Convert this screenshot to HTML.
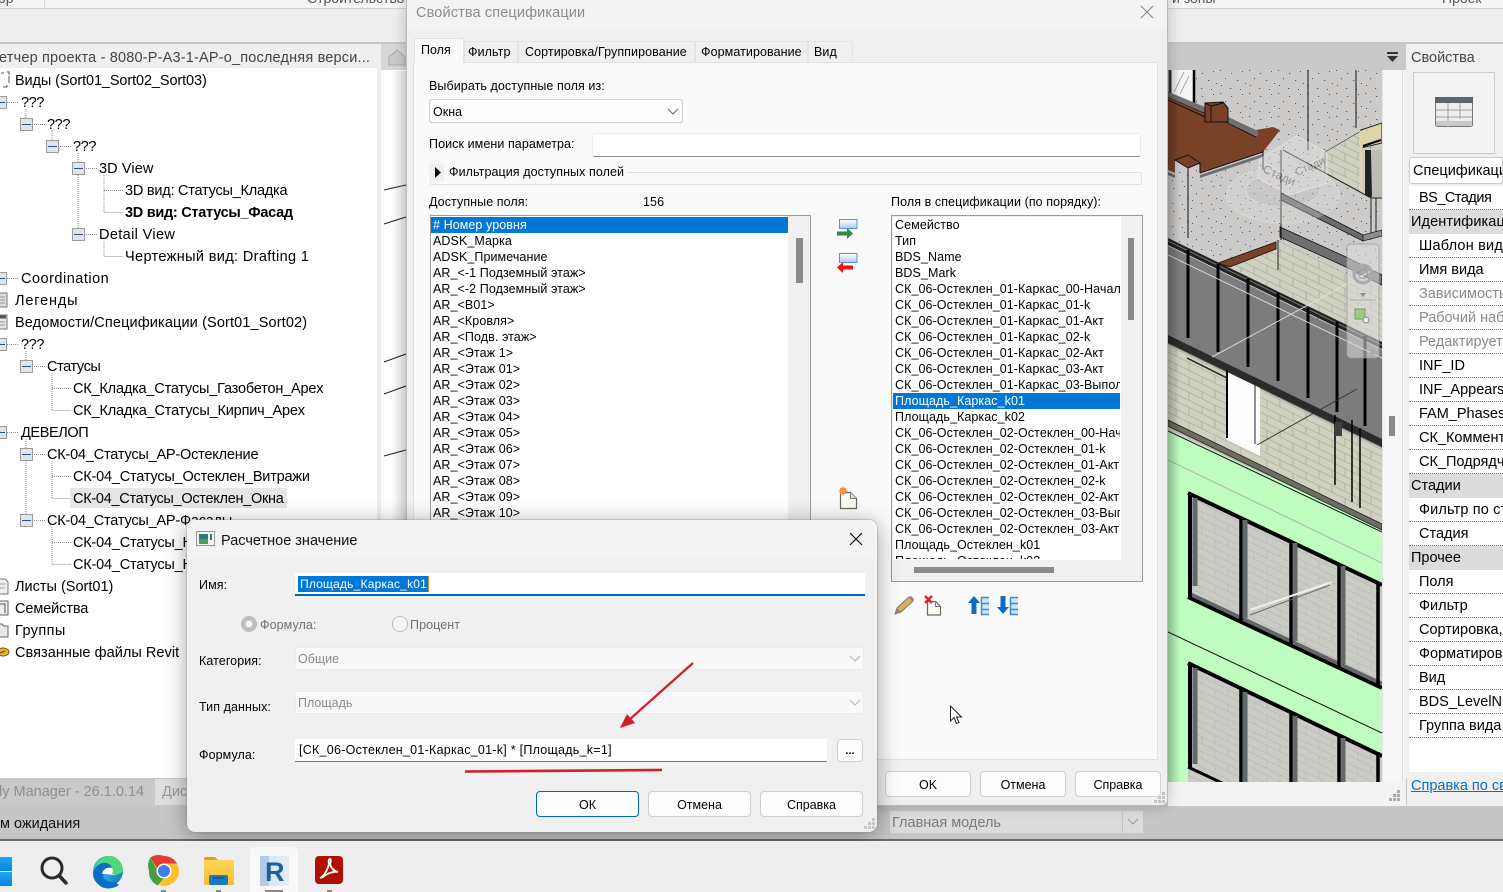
<!DOCTYPE html>
<html lang="ru"><head><meta charset="utf-8"><title>Свойства спецификации</title>
<style>
html,body{margin:0;padding:0;width:1503px;height:892px;overflow:hidden;background:#eee;font-family:"Liberation Sans","Noto Sans CJK SC",sans-serif;color:#000}
.a,.t{position:absolute}
.t{white-space:nowrap}
.tr{font-size:14.5px;line-height:22px;height:22px;margin-top:1px}
.d{font-size:12.5px;letter-spacing:.08px;line-height:16px;height:16px}
.list div{height:16px;line-height:17px;font-size:12.5px;letter-spacing:.08px;padding-left:2px;white-space:nowrap;overflow:hidden}
.sel{background:#0078d7;color:#fff}
.btn{position:absolute;box-sizing:border-box;background:#fdfdfd;border:1px solid #d0d0d0;border-radius:4px;text-align:center;font-size:12.5px;line-height:26px;height:26px}
.p{position:absolute;left:1409px;width:94px;height:24px;margin-top:1px;box-sizing:border-box;background:#fff;border-bottom:1px dotted #777;font-size:14.5px;line-height:25px;padding-left:10px;white-space:nowrap;overflow:hidden}
.h{background:#dcdcdc;border:0;padding-left:2px}
.g{color:#8a8a8a}
.tab{position:absolute;top:41px;height:21px;box-sizing:border-box;background:#f0f0f0;border:1px solid #e4e4e4;border-bottom:0;font-size:12.5px;letter-spacing:.08px;line-height:20px;text-align:left}
</style></head><body>

<!-- ribbon -->
<div class="a" style="left:0;top:0;width:1503px;height:8px;background:#f5f5f5;border-bottom:1px solid #d4d4d4"></div>
<div class="a" style="left:44px;top:0;width:1px;height:8px;background:#d8d8d8"></div>
<div class="t" style="left:-2px;top:-10px;font-size:14px;color:#555">ор</div>
<div class="t" style="left:307px;top:-10px;font-size:14px;color:#555">Строительство</div>
<div class="t" style="left:1172px;top:-10px;font-size:14px;color:#555">и зоны</div>
<div class="t" style="left:1442px;top:-10px;font-size:14px;color:#555">Проек</div>
<div class="a" style="left:0;top:9px;width:1503px;height:33px;background:#eee"></div>
<div class="a" style="left:0;top:42px;width:1503px;height:2px;background:#c4c4c4"></div>

<!-- project browser -->
<div class="a" style="left:0;top:44px;width:380px;height:734px;background:#fff"></div>
<div class="a" style="left:0;top:44px;width:380px;height:24px;background:#efefef"></div>
<div class="t" style="left:-1px;top:47px;font-size:14.5px;line-height:22px;color:#444;width:372px;overflow:hidden;letter-spacing:.18px">етчер проекта - 8080-P-A3-1-AP-о_последняя верси...</div>
<div class="a" style="left:377px;top:68px;width:4px;height:710px;background:#eee"></div>

<!-- drawing strip between browser and dialog -->
<div class="a" style="left:381px;top:44px;width:26px;height:26px;background:#d6d6d6"></div>
<div class="a" style="left:381px;top:70px;width:26px;height:708px;background:#fff"></div>
<svg class="a" style="left:381px;top:44px" width="26" height="734" viewBox="0 0 26 734">
<defs><linearGradient id="sh1" x1="0" x2="1"><stop offset="0" stop-color="#000" stop-opacity="0"/><stop offset="1" stop-color="#000" stop-opacity=".12"/></linearGradient></defs>
<path d="M8 13l8-7 8 7v8H8z" fill="#c9c9c9" stroke="#aaa"/>
<path d="M3 146l22-5M3 180l22-7M3 318l22-8M3 350l22-8M3 412l22-6" stroke="#222" fill="none"/>
<rect x="10" y="27" width="16" height="707" fill="url(#sh1)"/>
</svg>

<!-- tree connectors -->
<svg class="a" style="left:0;top:68px" width="380" height="600" viewBox="0 68 380 600" fill="none" stroke="#8c8c8c" stroke-dasharray="1 1">
<path d="M7 102.500H19M26 109V118M32 124.500H45M52 131V140M58 146.500H71M78 153V162M84 168.500H97M84 234.500H97M78 175V228M104 175V212.500H123M104 190.500H123M104 241V256.500H123"/>
<path d="M7 278.500H19M7 344.500H19M26 351V360M32 366.500H45M52 373V410.500H71M52 388.500H71M7 432.500H19M26 439V514M32 454.500H45M52 461V498.500H71M52 476.500H71M32 520.500H45M52 527V564.500H71M52 542.500H71"/>
</svg>
<!-- expanders -->
<svg class="a" style="left:0;top:68px" width="100" height="470" viewBox="0 68 100 470">
<defs><g id="ex"><rect x=".5" y=".5" width="12" height="12" fill="#e4e4e4" stroke="#9a9a9a"/><path d="M2 6.500H11" stroke="#2a4fa0"/></g></defs>
<use href="#ex" x="-6" y="96"/><use href="#ex" x="20" y="118"/><use href="#ex" x="46" y="140"/><use href="#ex" x="72" y="162"/><use href="#ex" x="72" y="228"/>
<use href="#ex" x="-6" y="272"/><use href="#ex" x="-6" y="338"/><use href="#ex" x="20" y="360"/><use href="#ex" x="-6" y="426"/><use href="#ex" x="20" y="448"/><use href="#ex" x="20" y="514"/>
<!-- node icons -->
<path d="M1 73h3M7 72h2v3M7 85v2H3M9 76v7" stroke="#555" fill="none"/>
<rect x="-4" y="293" width="11" height="14" fill="#ddd" stroke="#777"/><path d="M-2 297h7M-2 300h7M-2 303h7" stroke="#999"/>
<rect x="-4" y="315" width="11" height="14" fill="#e6e6e6" stroke="#777"/><path d="M-3 317h9" stroke="#555" stroke-width="3"/><path d="M-2 322h7M-2 325h7" stroke="#999"/>
</svg>
<svg class="a" style="left:0;top:570px" width="14" height="90" viewBox="0 570 14 90">
<path d="M-3 579h8l3 3v12H-3z" fill="#eee" stroke="#777"/><path d="M0 584h5M0 588h5" stroke="#aaa"/>
<path d="M-3 601h11v14H-3z" fill="#eee" stroke="#666"/><path d="M0 604h5v9" stroke="#555" fill="none"/>
<path d="M-3 624h5l2 2h4v11H-3z" fill="#e8e8e8" stroke="#666"/>
<ellipse cx="3" cy="652" rx="6" ry="4" fill="#e8b02e" stroke="#7d5a10"/><path d="M0 653l5-2" stroke="#5c4a10"/>
</svg>

<div class="a" style="left:70px;top:488px;width:217px;height:20px;background:#e6e6e6"></div>
<div class="t tr" style="left:15px;top:69px;letter-spacing:-.11px">Виды (Sort01_Sort02_Sort03)</div>
<div class="t tr" style="left:21px;top:91px;letter-spacing:-.4px">???</div>
<div class="t tr" style="left:47px;top:113px;letter-spacing:-.4px">???</div>
<div class="t tr" style="left:73px;top:135px;letter-spacing:-.4px">???</div>
<div class="t tr" style="left:99px;top:157px;letter-spacing:.1px">3D View</div>
<div class="t tr" style="left:125px;top:179px;letter-spacing:-.23px">3D вид: Статусы_Кладка</div>
<div class="t tr" style="left:125px;top:201px;font-weight:bold;letter-spacing:-.28px">3D вид: Статусы_Фасад</div>
<div class="t tr" style="left:99px;top:223px;letter-spacing:.36px">Detail View</div>
<div class="t tr" style="left:125px;top:245px;letter-spacing:.36px">Чертежный вид: Drafting 1</div>
<div class="t tr" style="left:21px;top:267px;letter-spacing:.5px">Coordination</div>
<div class="t tr" style="left:15px;top:289px;letter-spacing:.85px">Легенды</div>
<div class="t tr" style="left:15px;top:311px;letter-spacing:.13px">Ведомости/Спецификации (Sort01_Sort02)</div>
<div class="t tr" style="left:21px;top:333px;letter-spacing:-.4px">???</div>
<div class="t tr" style="left:47px;top:355px;letter-spacing:-.4px">Статусы</div>
<div class="t tr" style="left:73px;top:377px;letter-spacing:-.19px">СК_Кладка_Статусы_Газобетон_Apex</div>
<div class="t tr" style="left:73px;top:399px;letter-spacing:-.17px">СК_Кладка_Статусы_Кирпич_Apex</div>
<div class="t tr" style="left:21px;top:421px;letter-spacing:-.4px">ДЕВЕЛОП</div>
<div class="t tr" style="left:47px;top:443px;letter-spacing:-.2px">СК-04_Статусы_АР-Остекление</div>
<div class="t tr" style="left:73px;top:465px;letter-spacing:-.2px">СК-04_Статусы_Остеклен_Витражи</div>
<div class="t tr" style="left:73px;top:487px;letter-spacing:-.28px">СК-04_Статусы_Остеклен_Окна</div>
<div class="t tr" style="left:47px;top:509px;letter-spacing:-.2px">СК-04_Статусы_АР-Фасады</div>
<div class="t tr" style="left:73px;top:531px;letter-spacing:-.2px">СК-04_Статусы_Навесные</div>
<div class="t tr" style="left:73px;top:553px;letter-spacing:-.2px">СК-04_Статусы_Навесные</div>
<div class="t tr" style="left:15px;top:575px">Листы (Sort01)</div>
<div class="t tr" style="left:15px;top:597px;letter-spacing:-.1px">Семейства</div>
<div class="t tr" style="left:15px;top:619px;letter-spacing:.4px">Группы</div>
<div class="t tr" style="left:15px;top:641px;letter-spacing:.05px">Связанные файлы Revit</div>

<!-- bottom dimmed bars -->
<div class="a" style="left:0;top:778px;width:1503px;height:62px;background:#c6c6c6"></div>
<div class="a" style="left:0;top:780px;width:155px;height:26px;background:#c9c9c9"></div>
<div class="t" style="left:-1px;top:782px;font-size:14.5px;line-height:20px;color:#8f8f8f;margin-top:0">ly Manager - 26.1.0.14</div>
<div class="a" style="left:155px;top:779px;width:32px;height:26px;background:#dedede"></div>
<div class="t" style="left:162px;top:782px;font-size:14.5px;line-height:20px;color:#9a9a9a">Дис</div>
<div class="t" style="left:0;top:814px;font-size:14.5px;line-height:20px;color:#111">м ожидания</div>
<div class="a" style="left:890px;top:811px;width:253px;height:22px;background:#dcdcdc;font-size:14.5px;line-height:25px;color:#7a7a7a;text-indent:2px">Главная модель</div>
<div class="a" style="left:1122px;top:811px;width:1px;height:22px;background:#c4c4c4"></div>
<svg class="a" style="left:1127px;top:818px" width="12" height="8"><path d="M1 1l5 5 5-5" fill="none" stroke="#999"/></svg>
<div class="a" style="left:0;top:839px;width:1503px;height:2px;background:#5f6d73"></div>

<!-- viewport -->
<div class="a" style="left:1168px;top:44px;width:238px;height:26px;background:#c9c9c9"></div>
<svg class="a" style="left:1386px;top:52px" width="13" height="10"><path d="M1 0h11v2H1z" fill="#333"/><path d="M1 4h11L6.500 10z" fill="#333"/></svg>
<div class="a" style="left:1168px;top:70px;width:238px;height:736px;background:#f3f3f3"></div>
<div class="a" style="left:1382px;top:71px;width:20px;height:711px;background:#f6f6f6;border-right:1px solid #ddd"></div>
<div class="a" style="left:1389px;top:416px;width:6px;height:20px;background:#8a8a8a"></div>
<svg class="a" style="left:1388px;top:790px" width="14" height="14"><g fill="#aaa"><rect x="9" y="0" width="3" height="3"/><rect x="5" y="4" width="3" height="3"/><rect x="9" y="4" width="3" height="3"/><rect x="1" y="8" width="3" height="3"/><rect x="5" y="8" width="3" height="3"/><rect x="9" y="8" width="3" height="3"/></g></svg>

<svg class="a" style="left:1168px;top:70px" width="214" height="712" viewBox="1168 70 214 712">
<defs>
<pattern id="sp" width="29" height="23" patternUnits="userSpaceOnUse">
<rect width="29" height="23" fill="#cdcbc9"/>
<g fill="#5a5a5a"><rect x="2" y="1" width="1.200" height="1"/><rect x="13" y="4" width="1.200" height="1"/><rect x="24" y="2" width="1" height="1"/><rect x="7" y="9" width="1" height="1.200"/><rect x="19" y="11" width="1.200" height="1"/><rect x="27" y="14" width="1" height="1"/><rect x="3" y="16" width="1" height="1"/><rect x="12" y="19" width="1.200" height="1"/><rect x="22" y="20" width="1" height="1"/></g>
</pattern>
<pattern id="br" width="26" height="15" patternUnits="userSpaceOnUse" patternTransform="skewY(26)">
<rect width="26" height="15" fill="#d0d1c1"/><path d="M0 .5H26M0 7.500H26M6 0V7.500M19 7.500V15" stroke="#aaab9d" stroke-width=".8" fill="none"/>
</pattern>
<pattern id="gl" width="26" height="15" patternUnits="userSpaceOnUse" patternTransform="skewY(26)">
<rect width="26" height="15" fill="#cbcbc6"/><path d="M0 .5H26M0 7.500H26M6 0V7.500M19 7.500V15" stroke="#b8b8b2" stroke-width=".7" fill="none"/>
</pattern>
<linearGradient id="fade" x1="0" x2="1"><stop offset="0" stop-color="#000" stop-opacity=".18"/><stop offset="1" stop-color="#000" stop-opacity="0"/></linearGradient>
</defs>
<rect x="1168" y="70" width="214" height="712" fill="url(#sp)"/>
<!-- top window -->
<path d="M1168 70h27v33l-27-12z" fill="#f4f4f4"/><path d="M1174 92l10-20M1180 94l9-18" stroke="#aaa"/><path d="M1194 70v33" stroke="#000" stroke-width="2.500"/><path d="M1170 70v24" stroke="#333" stroke-width="3"/>
<!-- brown terrace -->
<path d="M1168 97l37 16v-10l18-1 3 20 30 15v-7l17-3 7 3-17 22-63 21v-8l-12-10-13 5v13l-7-3z" fill="#7a4129"/>
<path d="M1168 97l37 16M1226 122l30 15M1168 100l37 17M1200 173l63-21" stroke="#111" fill="none"/>
<path d="M1168 92l37 15v6l-37-16zM1226 116l32 15v6l-32-15zM1200 175l63-21v3l-63 21zM1168 172l7 3v3l-7-3z" fill="#6f6f6f"/>
<path d="M1205 103l18-1 5 6v14h-23z" fill="#7a4129" stroke="#111"/>
<path d="M1205 103l6 3v15M1211 106l12-3" stroke="#111" fill="none"/>
<path d="M1175 160l13-5 12 8-12 5z" fill="#7a4129" stroke="#111"/>
<path d="M1188 168v70M1200 173v-10" stroke="#111"/>
<path d="M1308 70v80M1356 70v58M1263 150v20" stroke="#111" fill="none"/>
<!-- right detail -->
<path d="M1325 152l36-21v66l-36-20z" fill="url(#br)" stroke="#333" stroke-width=".6"/>
<path d="M1361 130l21-7v20l-21 5z" fill="#ded4a6" stroke="#222"/>
<path d="M1361 131v66" stroke="#dfd6a8" stroke-width="3"/>
<path d="M1365 150h6l1 47h-7z" fill="#222"/><path d="M1372 150h10v50h-10z" fill="#bdbdb2"/><path d="M1363 146l18-6" stroke="#000" stroke-width="2"/>
<!-- parapet right -->
<path d="M1283 150l88 48 11-1v32l-19 5-82-42z" fill="url(#sp)"/>
<path d="M1283 150l88 48h11M1371 198v36M1376 198v34" stroke="#222" fill="none"/>
<path d="M1281 193l82 42v6l-82-41z" fill="#6c6c6c" stroke="#111" stroke-width=".8"/>
<path d="M1363 235l19-5v6l-19 5z" fill="#8c8c8c" stroke="#222" stroke-width=".8"/>
<path d="M1280 227l66 30 36 18v10l-36-18-66-30z" fill="#6f6f6f" stroke="#111" stroke-width=".8"/>
<path d="M1281 150v90" stroke="#111" fill="none"/>
<!-- brick room -->
<path d="M1228 267l50-27 104 52v52z" fill="url(#br)"/>
<path d="M1218 263l58-21v7l-46 18z" fill="#7a4129" stroke="#111" stroke-width=".8"/>
<path d="M1278 240v30" stroke="#222"/>
<!-- curtain wall -->
<path d="M1168 246l214 104v100l-214-104z" fill="#7c7c7c"/>
<path d="M1168 238l214 104v7l-214-104z" fill="#222"/>
<path d="M1168 241l214 104" stroke="#777"/>
<path d="M1188 250v88M1218 264v88M1248 279v88M1278 293v88M1308 308v90M1337 322v90M1365 336v90" stroke="#000" stroke-width="3"/>
<!-- lower brick & opening -->
<path d="M1168 344l214 104v90l-214-104z" fill="url(#br)"/>
<path d="M1168 335l214 104v8l-214-104z" fill="#2b2b2b"/>
<path d="M1227 372l33 16v68l-33-16z" fill="#fdfdfd"/>
<path d="M1227 370v68" stroke="#000" stroke-width="2"/>
<path d="M1187 358l40 20" stroke="#222" stroke-width="1.500"/><path d="M1255 382v62" stroke="#222"/>
<path d="M1257 445l100-56" stroke="#333" fill="none"/>
<path d="M1335 415v70M1352 420v82M1360 428v80" stroke="#000" stroke-width="1.500"/>
<rect x="1335" y="422" width="7" height="14" fill="#3c4244"/>
<!-- green facade -->
<path d="M1168 430l214 98v254h-214z" fill="#bffcc0"/>
<path d="M1168 420l214 104v6l-214-104z" fill="#6e6d62" stroke="#222" stroke-width=".8"/>
<path d="M1168 431l214 101" stroke="#111" fill="none"/>
<path d="M1168 460l214 103" stroke="#aeb5ae" fill="none"/>
<path d="M1168 632l214 101" stroke="#111" fill="none"/>
<!-- window 1 -->
<path d="M1188 493l194 92v103l-194-91z" fill="url(#gl)"/>
<path d="M1188 493l194 92M1188 597l194 91" stroke="#000" stroke-width="4" fill="none"/>
<path d="M1190 594l192 90" stroke="#5f6768" stroke-width="4" fill="none"/>
<path d="M1190 493v104" stroke="#000" stroke-width="4"/>
<path d="M1195 498v88" stroke="#626a6b" stroke-width="5"/>
<path d="M1241 518v103M1291 541v104M1339 564v103M1378 583v104" stroke="#000" stroke-width="3.500"/>
<path d="M1245 520v98M1295 543v98M1343 566v98" stroke="#626a6b" stroke-width="5"/>
<path d="M1250 610l82-28" stroke="#eee" stroke-width="2" fill="none"/>
<path d="M1250 615l80-30" stroke="#666" fill="none"/>
<!-- window 2 -->
<path d="M1188 663l194 93v40h-194z" fill="url(#gl)"/>
<path d="M1188 663l194 93" stroke="#000" stroke-width="4" fill="none"/>
<path d="M1190 663v104" stroke="#000" stroke-width="4"/>
<path d="M1195 668v96" stroke="#626a6b" stroke-width="5"/>
<path d="M1188 767l49 23" stroke="#000" stroke-width="3"/>
<path d="M1241 688v100M1291 712v76M1339 734v54M1378 752v36" stroke="#000" stroke-width="3.500"/>
<path d="M1245 692v96M1295 716v72M1343 738v50" stroke="#626a6b" stroke-width="5"/>
<!-- thin white lines on panels -->
<path d="M1168 255l214 103M1212 357l170-92" stroke="#e0e0e0" fill="none" opacity=".9"/>
<!-- view cube -->
<g opacity=".4">
<ellipse cx="1283" cy="195" rx="56" ry="28" fill="#ddd" stroke="#eee" stroke-width="1.500" opacity=".8"/>
<ellipse cx="1283" cy="190" rx="37" ry="17" fill="#c6c6c6" stroke="#eee"/>
<path d="M1259 159l38-23 30 17v30l-38 12-30-16z" fill="#e2e2e2" stroke="#fff"/>
<path d="M1259 159l30 19 38-25M1289 178v17" stroke="#fff" fill="none"/>
<text x="1262" y="172" font-size="12" fill="#444" transform="rotate(24 1262 172)" font-family="Liberation Sans, sans-serif">Стади</text>
<text x="1297" y="176" font-size="11" fill="#444" transform="rotate(-24 1297 176)" font-family="Liberation Sans, sans-serif">Стади</text>
</g>
<!-- nav bar -->
<rect x="1347" y="244" width="32" height="114" rx="4" fill="#dcdcdc" fill-opacity=".55" stroke="#999" stroke-opacity=".7"/>
<circle cx="1363" cy="274" r="9" fill="none" stroke="#aaa" stroke-width="3"/><circle cx="1363" cy="274" r="4.500" fill="none" stroke="#999"/>
<path d="M1350 300h26" stroke="#aaa"/><path d="M1360 293h6l-3 4z" fill="#888"/>
<rect x="1355" y="309" width="10" height="10" fill="#a4c68a" stroke="#76a060"/>
<circle cx="1366" cy="320" r="3" fill="#eee" stroke="#888"/><circle cx="1373" cy="352" r="3" fill="#aaa"/>
<rect x="1168" y="70" width="12" height="712" fill="url(#fade)"/>
</svg>
<div class="a" style="left:1382px;top:70px;width:1px;height:712px;background:#e6e6e6"></div>

<!-- properties panel -->
<div class="a" style="left:1407px;top:44px;width:96px;height:762px;background:#f0f0f0"></div>
<div class="t" style="left:1411px;top:47px;font-size:14.5px;line-height:22px;color:#444">Свойства</div>
<div class="a" style="left:1413px;top:72px;width:82px;height:82px;box-sizing:border-box;background:#f3f3f3;border:1px solid #ccc"></div>
<svg class="a" style="left:1434px;top:96px" width="40" height="32"><rect x="1.500" y="1.500" width="37" height="29" rx="2" fill="#eee" stroke="#777"/><rect x="1" y="1" width="38" height="6" fill="#5c6470"/><path d="M2 14h36M2 21h36M14 7v24M26 7v16" stroke="#a0a0a0"/><rect x="2" y="25" width="36" height="5" fill="#c8c8c8"/></svg>
<div class="a" style="left:1409px;top:157px;width:94px;height:27px;box-sizing:border-box;background:#fff;border:1px solid #ccc;border-radius:3px 0 0 3px;font-size:14.5px;line-height:27px;padding-left:3px;white-space:nowrap;overflow:hidden">Спецификация</div>
<div class="p" style="top:185px;letter-spacing:-.5px">BS_Стадия</div>
<div class="p h" style="top:209px;letter-spacing:.1px">Идентификация</div>
<div class="p" style="top:233px;letter-spacing:.2px">Шаблон вида</div>
<div class="p" style="top:257px">Имя вида</div>
<div class="p g" style="top:281px">Зависимость</div>
<div class="p g" style="top:305px">Рабочий набор</div>
<div class="p g" style="top:329px">Редактируется</div>
<div class="p" style="top:353px">INF_ID</div>
<div class="p" style="top:377px">INF_Appears</div>
<div class="p" style="top:401px">FAM_Phases</div>
<div class="p" style="top:425px">СК_Комментарий</div>
<div class="p" style="top:449px">СК_Подрядчик</div>
<div class="p h" style="top:473px">Стадии</div>
<div class="p" style="top:497px;letter-spacing:.15px">Фильтр по стадиям</div>
<div class="p" style="top:521px">Стадия</div>
<div class="p h" style="top:545px">Прочее</div>
<div class="p" style="top:569px">Поля</div>
<div class="p" style="top:593px">Фильтр</div>
<div class="p" style="top:617px">Сортировка,Групп</div>
<div class="p" style="top:641px">Форматирование</div>
<div class="p" style="top:665px">Вид</div>
<div class="p" style="top:689px">BDS_LevelNumber</div>
<div class="p" style="top:713px">Группа вида</div>
<div class="a" style="left:1409px;top:738px;width:94px;height:34px;background:#fff"></div>
<div class="t" style="left:1411px;top:775px;font-size:14.5px;line-height:22px;color:#0a6cc8;text-decoration:underline">Справка по свойствам</div>

<!-- DIALOG 1 -->
<div class="a" style="left:406px;top:-6px;width:762px;height:812px;background:#f0f0f0;border:1px solid #bbb;box-sizing:border-box;box-shadow:0 0 14px rgba(0,0,0,.22);border-radius:0 0 6px 6px"></div>
<div class="a" style="left:407px;top:0;width:760px;height:30px;background:#f3f3f3"></div>
<div class="t" style="left:416px;top:3px;font-size:14.5px;line-height:20px;color:#8c8c8c;letter-spacing:.13px">Свойства спецификации</div>
<svg class="a" style="left:1140px;top:5px" width="14" height="14"><path d="M1 1l12 12M13 1L1 13" stroke="#888" stroke-width="1.100"/></svg>
<div class="a" style="left:413px;top:62px;width:745px;height:698px;box-sizing:border-box;background:#fafafa;border:1px solid #e2e2e2"></div>
<div class="tab" style="left:464px;width:54px;padding-left:3px">Фильтр</div>
<div class="tab" style="left:518px;width:177px;padding-left:6px">Сортировка/Группирование</div>
<div class="tab" style="left:695px;width:113px;padding-left:5px">Форматирование</div>
<div class="tab" style="left:808px;width:45px;padding-left:5px">Вид</div>
<div class="a" style="left:414px;top:38px;width:50px;height:25px;box-sizing:border-box;background:#fafafa;border:1px solid #e2e2e2;border-bottom:0;font-size:12.5px;line-height:22px;padding-left:6px;color:#000">Поля</div>

<div class="t d" style="left:429px;top:78px">Выбирать доступные поля из:</div>
<div class="a" style="left:429px;top:99px;width:254px;height:24px;box-sizing:border-box;background:#fdfdfd;border:1px solid #d0d0d0;border-radius:3px;font-size:12.5px;line-height:24px;padding-left:3px">Окна</div>
<svg class="a" style="left:667px;top:108px" width="12" height="8"><path d="M1 1l5 5 5-5" fill="none" stroke="#666"/></svg>
<div class="t d" style="left:429px;top:136px">Поиск имени параметра:</div>
<div class="a" style="left:592px;top:133px;width:549px;height:24px;box-sizing:border-box;background:#fff;border:1px solid #ececec;border-bottom:1px solid #8a8a8a;border-radius:3px"></div>
<div class="a" style="left:430px;top:172px;width:712px;height:13px;box-sizing:border-box;border:1px solid #e2e2e2;border-top:1px solid #e0e0e0;border-radius:2px"></div>
<div class="a" style="left:429px;top:164px;width:198px;height:17px;background:#fafafa"></div>
<div class="a" style="left:429px;top:164px;width:15px;height:17px;background:#f0f0f0"></div>
<svg class="a" style="left:434px;top:167px" width="8" height="11"><path d="M1 0l6 5.500-6 5.500z" fill="#000"/></svg>
<div class="t d" style="left:449px;top:164px">Фильтрация доступных полей</div>
<div class="t d" style="left:429px;top:194px">Доступные поля:</div>
<div class="t d" style="left:643px;top:194px">156</div>
<div class="t d" style="left:891px;top:194px">Поля в спецификации (по порядку):</div>

<!-- left list -->
<div class="a" style="left:430px;top:215px;width:381px;height:320px;box-sizing:border-box;background:#fff;border:1px solid #9a9a9a"></div>
<div class="a" style="left:788px;top:216px;width:22px;height:319px;background:#f0f0f0"></div>
<div class="a" style="left:796px;top:238px;width:7px;height:45px;background:#8a8a8a"></div>
<div class="a list" style="left:431px;top:217px;width:357px">
<div class="sel">#&nbsp;Номер уровня</div><div>ADSK_Марка</div><div>ADSK_Примечание</div><div>AR_&lt;-1 Подземный этаж&gt;</div><div>AR_&lt;-2 Подземный этаж&gt;</div><div>AR_&lt;B01&gt;</div><div>AR_&lt;Кровля&gt;</div><div>AR_&lt;Подв. этаж&gt;</div><div>AR_&lt;Этаж 1&gt;</div><div>AR_&lt;Этаж 01&gt;</div><div>AR_&lt;Этаж 02&gt;</div><div>AR_&lt;Этаж 03&gt;</div><div>AR_&lt;Этаж 04&gt;</div><div>AR_&lt;Этаж 05&gt;</div><div>AR_&lt;Этаж 06&gt;</div><div>AR_&lt;Этаж 07&gt;</div><div>AR_&lt;Этаж 08&gt;</div><div>AR_&lt;Этаж 09&gt;</div><div>AR_&lt;Этаж 10&gt;</div>
</div>

<!-- move icons -->
<svg class="a" style="left:836px;top:217px" width="24" height="56">
<defs><linearGradient id="bb" x1="0" x2="0" y1="0" y2="1"><stop offset="0" stop-color="#fff"/><stop offset="1" stop-color="#a8cdee"/></linearGradient></defs>
<path d="M3.500 2.500H21v9H3.500z" fill="url(#bb)" stroke="#5b93cc"/><path d="M1 16.500h11" stroke="#2e8b46" stroke-width="4"/><path d="M11 11l6 5.500-6 5.500z" fill="#2e8b46"/>
<path d="M3.500 36.500H21v9H3.500z" fill="url(#bb)" stroke="#5b93cc"/><path d="M7 50.500h10" stroke="#ee1111" stroke-width="4"/><path d="M7 45l-6 5.500 6 5.500z" fill="#ee1111"/>
</svg>
<svg class="a" style="left:836px;top:486px" width="24" height="24">
<path d="M4.500 6.500h10l6 6v10h-16z" fill="#fbfbf3" stroke="#666" stroke-width="1.200"/><path d="M14.500 6.500v6h6" fill="#ddd" stroke="#777"/>
<circle cx="7" cy="5" r="3.500" fill="#f47b20"/><path d="M7 .5v9M2.500 5h9M4 2l6 6M10 2l-6 6" stroke="#f9a25a"/>
</svg>

<!-- right list -->
<div class="a" style="left:891px;top:215px;width:252px;height:367px;box-sizing:border-box;background:#f0f0f0;border:1px solid #9a9a9a"></div>
<div class="a" style="left:893px;top:217px;width:228px;height:343px;background:#fff"></div>
<div class="a" style="left:1128px;top:238px;width:6px;height:82px;background:#8a8a8a"></div>
<div class="a" style="left:914px;top:567px;width:140px;height:6px;background:#8a8a8a"></div>
<div class="a list" style="left:893px;top:217px;width:227px;height:342px;overflow:hidden">
<div>Семейство</div><div>Тип</div><div>BDS_Name</div><div>BDS_Mark</div><div>СК_06-Остеклен_01-Каркас_00-Начало</div><div>СК_06-Остеклен_01-Каркас_01-k</div><div>СК_06-Остеклен_01-Каркас_01-Акт</div><div>СК_06-Остеклен_01-Каркас_02-k</div><div>СК_06-Остеклен_01-Каркас_02-Акт</div><div>СК_06-Остеклен_01-Каркас_03-Акт</div><div>СК_06-Остеклен_01-Каркас_03-Выполн</div><div class="sel">Площадь_Каркас_k01</div><div>Площадь_Каркас_k02</div><div>СК_06-Остеклен_02-Остеклен_00-Начало</div><div>СК_06-Остеклен_02-Остеклен_01-k</div><div>СК_06-Остеклен_02-Остеклен_01-Акт</div><div>СК_06-Остеклен_02-Остеклен_02-k</div><div>СК_06-Остеклен_02-Остеклен_02-Акт</div><div>СК_06-Остеклен_02-Остеклен_03-Выполн</div><div>СК_06-Остеклен_02-Остеклен_03-Акт</div><div>Площадь_Остеклен_k01</div><div>Площадь_Остеклен_k02</div>
</div>

<!-- icon row -->
<svg class="a" style="left:892px;top:594px" width="130" height="24">
<path d="M3 20l2-6L17 3l4 4L9 18z" fill="#d8b060" stroke="#7c7468"/><path d="M17 3l2-1 3 3-1 2z" fill="#b08060"/><path d="M3 20l2-6 4 4z" fill="#888"/>
<path d="M35.500 7.500h8l5 5v8.500h-13z" fill="#fbfbf3" stroke="#666" stroke-width="1.200"/><path d="M43.500 7.500v5h5" fill="none" stroke="#777"/>
<path d="M33 2l7 7M40 2l-7 7" stroke="#d8232a" stroke-width="2.400"/>
<path d="M82 2l6 7h-3.500v11h-5V9H76z" fill="#0a6cc0"/><rect x="89" y="3" width="8" height="18" fill="#cfe4f6"/><path d="M89 3.500h8M89 9.500h8M89 15.500h8M89 20.500h8M89.500 3.500v17" stroke="#3f8ad4" stroke-width="1.500" fill="none"/>
<path d="M111 20l-6-7h3.500V2h5v11H117z" fill="#0a6cc0"/><rect x="118" y="3" width="8" height="18" fill="#cfe4f6"/><path d="M118 3.500h8M118 9.500h8M118 15.500h8M118 20.500h8M118.500 3.500v17" stroke="#3f8ad4" stroke-width="1.500" fill="none"/>
</svg>

<!-- cursor -->
<svg class="a" style="left:949px;top:705px" width="15" height="20"><path d="M1.500 1v15l3.500-3.500 2.500 6 2.500-1-2.500-5.500h5z" fill="#fff" stroke="#222"/></svg>

<!-- dialog1 buttons -->
<div class="btn" style="left:885px;top:771px;width:86px">OK</div>
<div class="btn" style="left:980px;top:771px;width:86px">Отмена</div>
<div class="btn" style="left:1075px;top:771px;width:86px">Справка</div>
<svg class="a" style="left:1153px;top:792px" width="14" height="14"><g fill="#c4c4c4"><rect x="9" y="0" width="3" height="3"/><rect x="5" y="4" width="3" height="3"/><rect x="9" y="4" width="3" height="3"/><rect x="1" y="8" width="3" height="3"/><rect x="5" y="8" width="3" height="3"/><rect x="9" y="8" width="3" height="3"/></g></svg>

<!-- DIALOG 2 -->
<div class="a" style="left:187px;top:520px;width:690px;height:312px;background:#f0f0f0;border-radius:8px;box-shadow:0 3px 22px rgba(0,0,0,.38);outline:1px solid rgba(120,120,120,.25)"></div>
<div class="a" style="left:187px;top:520px;width:690px;height:38px;background:#f3f3f3;border-radius:8px 8px 0 0"></div>
<svg class="a" style="left:196px;top:531px" width="20" height="16"><rect x=".5" y=".5" width="18" height="14" fill="#f4f4f4" stroke="#999"/><rect x="3" y="3" width="9" height="10" fill="#2d7a80"/><rect x="3" y="8" width="9" height="5" fill="#4aa052"/><path d="M15 3v6" stroke="#2d7a80" stroke-width="2"/></svg>
<div class="t" style="left:221px;top:531px;font-size:14.5px;line-height:20px;color:#111">Расчетное значение</div>
<svg class="a" style="left:849px;top:532px" width="14" height="14"><path d="M1 1l12 12M13 1L1 13" stroke="#111" stroke-width="1.200"/></svg>

<div class="t d" style="left:199px;top:577px">Имя:</div>
<div class="a" style="left:295px;top:573px;width:570px;height:23px;box-sizing:border-box;background:#fff;border-bottom:2px solid #0067c0"></div>
<div class="t" style="left:298px;top:576px;font-size:12px;letter-spacing:.2px;line-height:16px;background:#0078d7;color:#fff;padding:0 1px 0 2px;border-right:1px solid #e08a30">Площадь_Каркас_k01</div>

<svg class="a" style="left:240px;top:615px" width="18" height="18"><circle cx="9" cy="9" r="8" fill="#bdbdbd"/><circle cx="9" cy="9" r="3.500" fill="#f4f4f4"/></svg>
<div class="t d" style="left:260px;top:617px;color:#707070">Формула:</div>
<svg class="a" style="left:391px;top:615px" width="18" height="18"><circle cx="9" cy="9" r="7.500" fill="#f6f6f6" stroke="#bdbdbd"/></svg>
<div class="t d" style="left:410px;top:617px;color:#707070">Процент</div>

<div class="t d" style="left:199px;top:653px">Категория:</div>
<div class="a" style="left:295px;top:647px;width:569px;height:23px;box-sizing:border-box;background:#f8f8f8;border:1px solid #ececec;font-size:12.5px;line-height:22px;color:#8a8a8a;padding-left:2px">Общие</div>
<svg class="a" style="left:849px;top:655px" width="12" height="8"><path d="M1 1l5 5 5-5" fill="none" stroke="#b6b6b6"/></svg>
<div class="t d" style="left:199px;top:699px">Тип данных:</div>
<div class="a" style="left:295px;top:691px;width:569px;height:23px;box-sizing:border-box;background:#f8f8f8;border:1px solid #ececec;font-size:12.5px;line-height:22px;color:#8a8a8a;padding-left:2px">Площадь</div>
<svg class="a" style="left:849px;top:699px" width="12" height="8"><path d="M1 1l5 5 5-5" fill="none" stroke="#b6b6b6"/></svg>
<div class="t d" style="left:199px;top:747px">Формула:</div>
<div class="a" style="left:295px;top:739px;width:532px;height:23px;box-sizing:border-box;background:#fff;border-bottom:1px solid #777;font-size:12.5px;letter-spacing:.26px;line-height:22px;padding-left:4px;color:#000;white-space:nowrap">[СК_06-Остеклен_01-Каркас_01-k] * [Площадь_k=1]</div>
<div class="btn" style="left:837px;top:739px;width:26px;height:23px;line-height:22px;font-weight:bold;font-size:11px">...</div>
<svg class="a" style="left:450px;top:650px" width="260" height="130">
<path d="M15 121.500l197-1.500" stroke="#cf1f2a" stroke-width="2.600" fill="none"/>
<path d="M243 13L179 70" stroke="#cf1f2a" stroke-width="2.200" fill="none"/>
<path d="M170 78l7-14 8 9z" fill="#cf1f2a"/>
</svg>
<div class="btn" style="left:536px;top:791px;width:103px;border:1px solid #0067c0">ОК</div>
<div class="btn" style="left:648px;top:791px;width:103px">Отмена</div>
<div class="btn" style="left:760px;top:791px;width:103px">Справка</div>
<svg class="a" style="left:863px;top:818px" width="14" height="14"><g fill="#c8c8c8"><rect x="9" y="0" width="3" height="3"/><rect x="5" y="4" width="3" height="3"/><rect x="9" y="4" width="3" height="3"/><rect x="1" y="8" width="3" height="3"/><rect x="5" y="8" width="3" height="3"/><rect x="9" y="8" width="3" height="3"/></g></svg>

<!-- taskbar -->
<div class="a" style="left:0;top:841px;width:1503px;height:51px;background:#eeeeee"></div>
<div class="a" style="left:250px;top:847px;width:48px;height:45px;background:#f8f8f8;border-radius:5px 5px 0 0"></div>
<svg class="a" style="left:0;top:841px" width="360" height="51" viewBox="0 841 360 51">
<defs>
<linearGradient id="win" x1="0" x2="0" y1="0" y2="1"><stop offset="0" stop-color="#1da6f0"/><stop offset="1" stop-color="#0a86dc"/></linearGradient>
<linearGradient id="ed1" x1="0" y1="0" x2="1" y2="1"><stop offset="0" stop-color="#2ecfa8"/><stop offset=".5" stop-color="#2bb7d8"/><stop offset="1" stop-color="#0d63b8"/></linearGradient>
<linearGradient id="fo" x1="0" x2="0" y1="0" y2="1"><stop offset="0" stop-color="#ffd75a"/><stop offset="1" stop-color="#f9be2d"/></linearGradient>
<linearGradient id="rv" x1="0" x2="1"><stop offset="0" stop-color="#d6e4f4"/><stop offset="1" stop-color="#e4edf6"/></linearGradient>
</defs>
<rect x="0" y="857" width="12" height="14" fill="url(#win)"/><rect x="0" y="872" width="12" height="14" fill="url(#win)"/>
<circle cx="52" cy="868" r="10" fill="none" stroke="#2a2a2a" stroke-width="3"/><path d="M59.500 876L66 883" stroke="#2a2a2a" stroke-width="3.500" stroke-linecap="round"/>
<circle cx="108" cy="871" r="15" fill="url(#ed1)"/><path d="M93 873c2-9 11-13 18-10 5 2 9 6 9 10l-6 2H103c0 5 6 8 12 7l4 3c-5 4-15 5-20 0-4-3-6-7-6-12z" fill="#0c6fc4"/><path d="M102 874c1-6 8-8 12-5 3 2 3 5 1 6z" fill="#fff"/><path d="M112 856a15 15 0 0 1 11 15c-3 4-8 4-11 3 2-4 0-9-5-11-4-1-9 1-12 5 2-7 9-12 17-12z" fill="#52d77a"/>
<circle cx="164" cy="871" r="15" fill="#fbc02d"/>
<path d="M164 856a15 15 0 0 1 13 7.500h-13a7.500 7.500 0 0 0-7 5l-6.500-11A15 15 0 0 1 164 856z" fill="#e53935"/>
<path d="M150.500 857.500l6.500 13a7.500 7.500 0 0 0 7 7.500l-6.500 7.500A15 15 0 0 1 149 871a15 15 0 0 1 1.500-13.500z" fill="#43a047"/>
<circle cx="164" cy="871" r="7.500" fill="#fff"/><circle cx="164" cy="871" r="6" fill="#3d7fe8"/>
<path d="M204 859a2 2 0 0 1 2-2h9l4 4h-15z" fill="#e0a318"/><rect x="204" y="860" width="30" height="25" rx="1" fill="url(#fo)"/><rect x="209" y="875" width="19" height="10" rx="2" fill="#1b78c4"/><path d="M213 878h11" stroke="#0f4d88" stroke-width="1.500"/>
<rect x="260" y="856" width="29" height="30" fill="url(#rv)"/><rect x="260" y="856" width="9" height="30" fill="#b4cbe6"/>
<text x="265" y="881" font-size="27" font-weight="bold" fill="#1d5fa0" font-family="Liberation Sans, sans-serif">R</text>
<rect x="315" y="856" width="28" height="28" rx="4" fill="#b10f00"/>
<path d="M320 878c4-2 7-7 9-14-1-3 0-5 1-5s1 3 0 5c1 4 4 7 8 8-3-1-11 1-15 5z" fill="none" stroke="#fff" stroke-width="1.800"/>
<path d="M161 891h5M216 891h5M265 891h18M327 891h5" stroke="#8a8a8a" stroke-width="2"/>
</svg>
</body></html>
